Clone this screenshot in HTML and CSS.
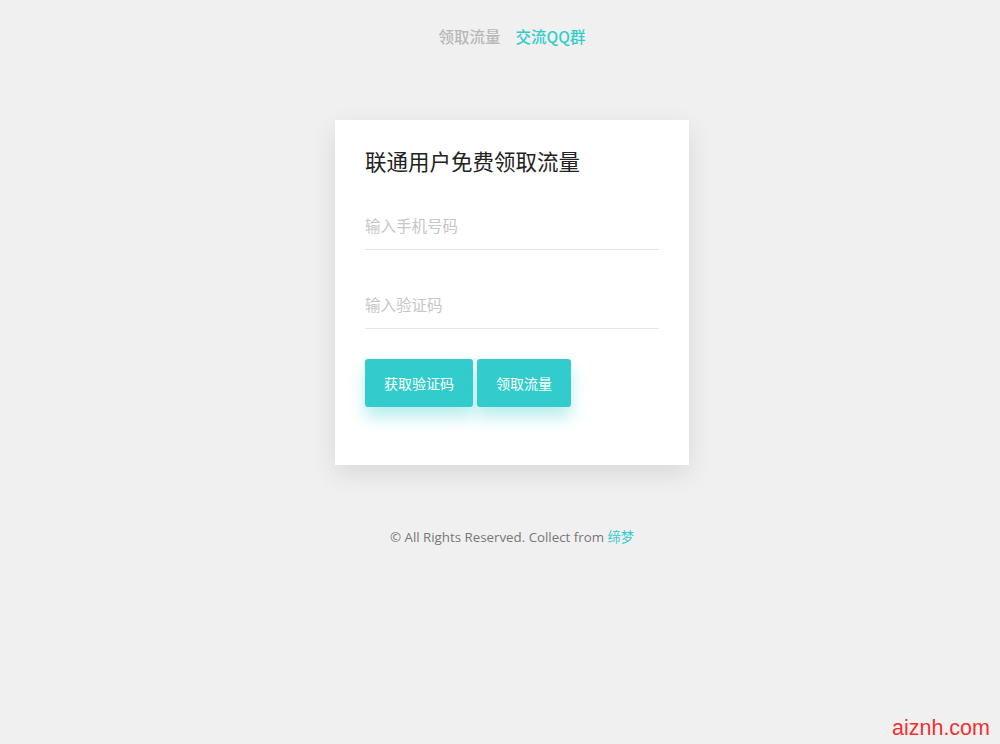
FILE: index.html
```html
<!DOCTYPE html>
<html>
<head>
<meta charset="utf-8">
<link rel="stylesheet" href="styles.css">
</head>
<body>
<div class="page">
  <nav class="nav">
    <a class="nav-item">领取流量</a>
    <a class="nav-item active">交流QQ群</a>
  </nav>
  <div class="card">
    <h2 class="title">联通用户免费领取流量</h2>
    <div class="field"><input class="input" placeholder="输入手机号码"></div>
    <div class="field"><input class="input" placeholder="输入验证码"></div>
    <div class="actions">
      <button class="btn btn-wide">获取验证码</button>
      <button class="btn">领取流量</button>
    </div>
  </div>
  <p class="footer">© All Rights Reserved. Collect from <a class="footer-link">缔梦</a></p>
</div>
<div class="watermark">aiznh.com</div>
</body>
</html>
```
FILE: styles.css
```css
* { box-sizing: border-box; }
html, body { margin: 0; padding: 0; }
body {
  background: #f0f0f0;
  width: 1000px;
  height: 744px;
  overflow: hidden;
  font-family: "Open Sans", "Noto Sans CJK SC", sans-serif;
  position: relative;
}
.page {
  width: 1024px;
  display: flex;
  flex-direction: column;
  align-items: center;
}
.nav {
  display: flex;
  gap: 15px;
  margin-top: 24px;
  height: 24px;
  align-items: center;
}
.nav-item {
  font-size: 15.5px;
  font-weight: 500;
  color: #b8b8b8;
  font-family: "Noto Sans CJK SC", sans-serif;
  line-height: 24px;
}
.nav-item.active { color: #33cccc; }
.card {
  margin-top: 72px;
  width: 354px;
  height: 345px;
  background: #fff;
  padding: 28px 30px 0 30px;
  box-shadow: 0 8px 24px rgba(0,0,0,0.10);
}
.title {
  margin: 0;
  font-size: 21.5px;
  font-weight: normal;
  color: #222;
  font-family: "Noto Sans CJK SC", sans-serif;
  line-height: 26px;
}
.field {
  margin-top: 31px;
}
.field + .field { margin-top: 34px; }
.input {
  display: block;
  width: 100%;
  height: 45px;
  border: none;
  border-bottom: 1px solid #e6e6e6;
  padding: 0 0 4px 0;
  font-size: 15.5px;
  font-family: "Noto Sans CJK SC", sans-serif;
  outline: none;
  background: transparent;
}
.input::placeholder { color: #c6c6c6; }
.actions {
  display: flex;
  gap: 4px;
  margin-top: 30px;
}
.btn {
  height: 48px;
  width: 94px;
  border: none;
  border-radius: 3px;
  background: #33cccc;
  color: #fff;
  font-size: 14px;
  font-family: "Noto Sans CJK SC", sans-serif;
  box-shadow: 0 10px 16px rgba(51,204,204,0.35);
  padding: 0;
}
.btn-wide { width: 108px; }
.footer {
  margin: 62px 0 0 0;
  font-size: 13.3px;
  color: #777;
  line-height: 20px;
}
.footer-link { color: #33cccc; font-family: "Noto Sans CJK SC", sans-serif; }
.watermark {
  position: absolute;
  right: 10px;
  top: 716px;
  font-family: "Liberation Sans", sans-serif;
  font-size: 21.5px;
  color: #f03030;
}
```
